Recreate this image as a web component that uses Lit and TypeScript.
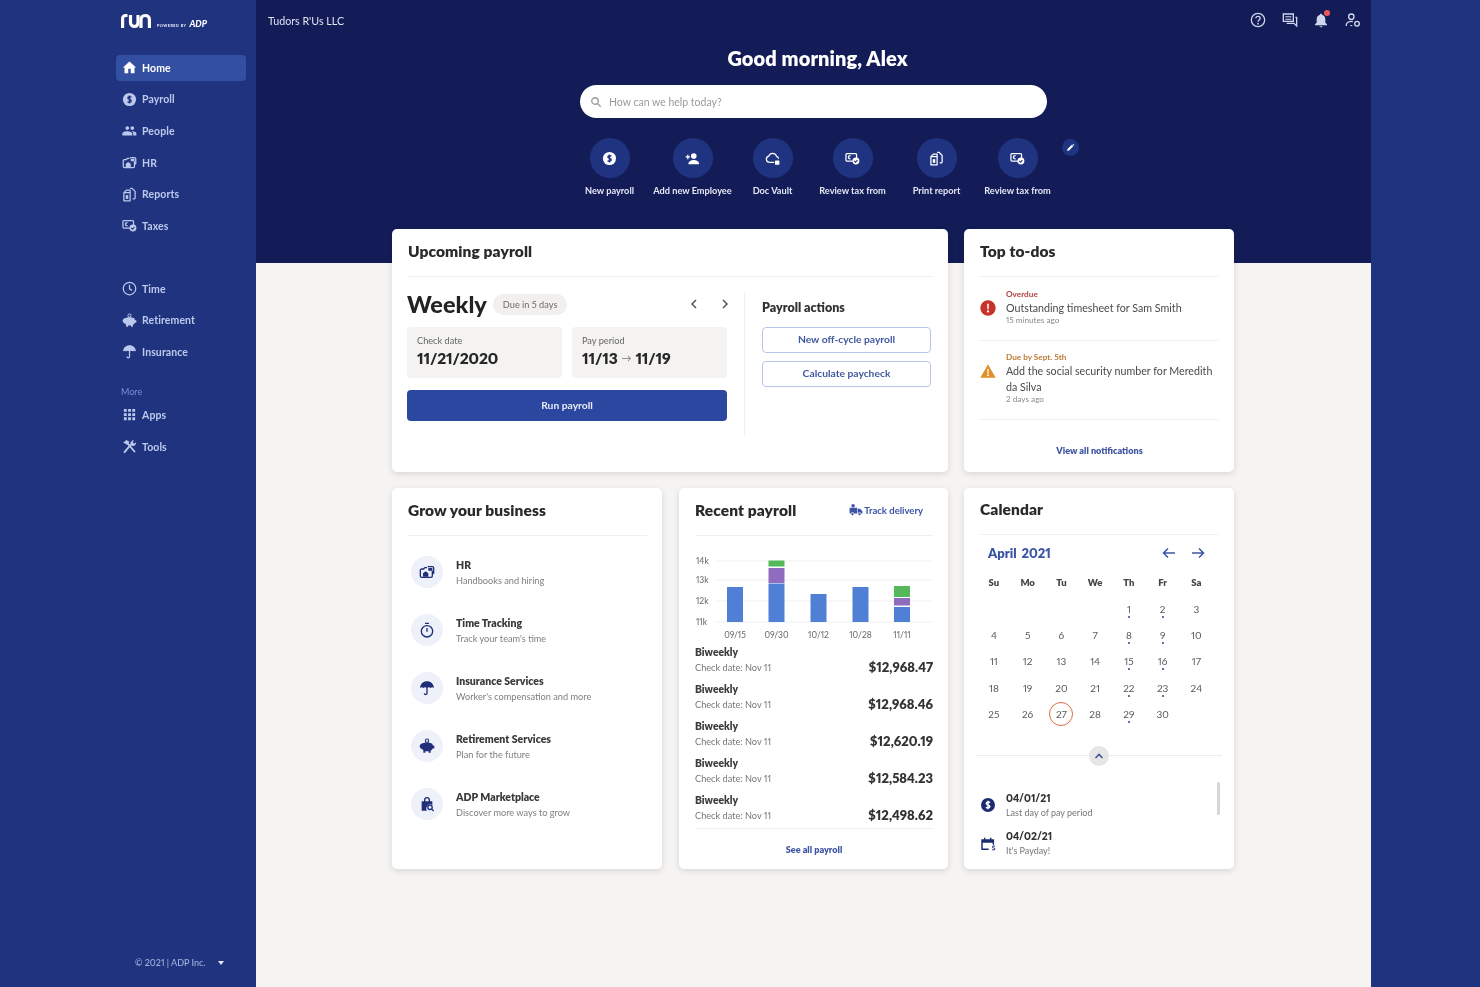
import { LitElement, html, css, svg, nothing } from "lit";
import { customElement } from "lit/decorators.js";

const I: Record<string, any> = {
  home: svg`<path fill="currentColor" d="M10 21v-7h4v7h6v-9h2.5L12 2.5 1.5 12H4v9z"/>`,
  dollar: svg`<circle cx="12" cy="12" r="10.5" fill="currentColor"/><path fill="none" stroke="var(--ic-bg,#1f337f)" stroke-width="2.2" d="M15 8.6C14 7.4 9.4 7 9.4 9.6c0 3 5.4 1.6 5.4 4.7 0 2.6-4.7 2.4-5.8 1M12 5.6v12.8"/>`,
  people: svg`<path fill="currentColor" d="M16.5 11c1.66 0 3-1.34 3-3s-1.34-3-3-3-3 1.34-3 3 1.34 3 3 3zm-8 0c1.66 0 3-1.34 3-3s-1.34-3-3-3-3 1.34-3 3 1.34 3 3 3zm0 2c-2.6 0-8 1.2-8 3.7V20h16v-3.3c0-2.5-5.400-3.700-8-3.700zm8 0c-.3 0-.7 0-1 .05 1.200.9 2.500 2.100 2.500 3.650V20H23v-3.300c0-2.500-4-3.700-6.500-3.700z"/>`,
  hr: svg`<g fill="none" stroke="currentColor" stroke-width="2" stroke-linejoin="round"><path d="M2 9.500a2 2 0 0 1 2-2h3l1.500-2h3.500M2 9.500V18a2 2 0 0 0 2 2h14a2 2 0 0 0 2-2V10"/><path d="M13 4h7a2 2 0 0 1 2 2v8h-2"/></g><path fill="currentColor" d="M6 19v-5l4-3 4 3v5zM14 6h6v4h-6z"/>`,
  report: svg`<g fill="none" stroke="currentColor" stroke-width="2" stroke-linejoin="round"><path d="M3 9h10v13H3zM3 9l4-4h6v4"/><path d="M13 2h3l5 5v10a2 2 0 0 1-2 2h-2"/></g><path fill="currentColor" d="M6 13h4v6H6z"/>`,
  tax: svg`<g fill="none" stroke="currentColor" stroke-width="2"><rect x="1.500" y="4" width="17" height="12" rx="1.500"/><path d="M9 7.500c-2 0-3.500 1-3.500 2.500s1.500 2.500 3.500 2.500"/></g><circle cx="17.500" cy="16" r="5.500" fill="currentColor"/><path fill="none" stroke="var(--ic-bg,#1f337f)" stroke-width="1.800" d="M14.800 16l2 2 3-3.500"/>`,
  clock: svg`<g fill="none" stroke="currentColor" stroke-width="2"><circle cx="12" cy="12" r="10"/><path d="M12 6v6.500l4 2.500"/></g>`,
  piggy: svg`<circle cx="12" cy="4" r="2.500" fill="none" stroke="currentColor" stroke-width="1.600"/><path fill="currentColor" d="M6 8c2-1.500 10-1.500 12 0l2 .5.500 2.500 2.500.800v3.500l-3 .7-1 2.500h-1.500V22h-3v-2h-5v2h-3v-3.500L5 17c-2-.5-4-2.500-4-4.500s2-4.500 5-4.500z"/>`,
  umbrella: svg`<path fill="currentColor" d="M12 2C6.500 2 2 6 1.500 12c1.500-1.500 3.500-1.500 5 0 1.500-1.500 3.500-1.500 5.500 0 2-1.500 4-1.500 5.500 0 1.500-1.500 3.500-1.500 5 0C22 6 17.500 2 12 2z"/><path fill="none" stroke="currentColor" stroke-width="2" d="M12 11v9a2 2 0 0 1-4 0"/>`,
  apps: svg`<path fill="currentColor" d="M3 3h4.500v4.500H3zM9.800 3h4.500v4.500H9.800zM16.500 3H21v4.500h-4.500zM3 9.800h4.500v4.500H3zM9.800 9.800h4.500v4.500H9.800zM16.500 9.800H21v4.500h-4.500zM3 16.500h4.500V21H3zM9.800 16.500h4.500V21H9.800zM16.500 16.500H21V21h-4.500z"/>`,
  tools: svg`<g fill="none" stroke="currentColor" stroke-width="3" stroke-linecap="round"><path d="M4 21 15 8M7 5l13 15"/></g><path fill="currentColor" d="M2 6l5-4.500 5 3-3 4.500zM14 9c-1-3 .5-7 5-7l-2 3 2.500 2.500L22.500 5c.5 4-3 7-6 6z"/>`,
  addUser: svg`<circle cx="14" cy="8" r="4.500" fill="currentColor"/><path fill="currentColor" d="M5.500 20c0-3.500 5-5.500 8.500-5.500s8.500 2 8.500 5.500v1h-17z"/><path fill="none" stroke="currentColor" stroke-width="2" d="M1 9.500h7M4.500 6v7"/>`,
  cloud: svg`<path fill="none" stroke="currentColor" stroke-width="2" stroke-linecap="round" d="M14 18H7a5 5 0 0 1-.8-9.900A6.500 6.500 0 0 1 18.500 8.500c1.500.5 2.500 1.500 3 3"/><rect x="16" y="15" width="7" height="7" rx="1" fill="currentColor"/>`,
  pencil: svg`<path fill="currentColor" d="M3 21l1-5L15.500 4.500l4 4L8 20zM17 3l1.500-1.200 3.700 3.700L21 7z"/>`,
  search: svg`<g fill="none" stroke="currentColor" stroke-width="2.600"><circle cx="10" cy="10" r="6.500"/><path d="M15 15l6.500 6.500"/></g>`,
  help: svg`<g fill="none" stroke="currentColor" stroke-width="1.900"><circle cx="12" cy="12" r="10"/><path d="M8.800 9.500c0-4 6.500-4 6.500-.2 0 2.700-3.300 2.500-3.300 5.200"/></g><circle cx="12" cy="17.500" r="1.300" fill="currentColor"/>`,
  chat: svg`<path fill="none" stroke="currentColor" stroke-width="2" d="M2 3h15v11H2zM7 17h11l4 4V8h-2"/><path fill="currentColor" d="M5 6.500h9V8H5zM5 10h9v1.500H5z"/>`,
  bell: svg`<path fill="currentColor" d="M12 2.500c-1 0-1.500.7-1.500 1.500C7 5 5.500 7.500 5.500 11v5L3 18.500V20h18v-1.500L18.500 16v-5c0-3.500-1.500-6-5-7 0-.8-.5-1.500-1.500-1.500zM9.500 21.200c.4 1 1.400 1.600 2.500 1.600s2.100-.6 2.500-1.600z"/>`,
  userCog: svg`<g fill="none" stroke="currentColor" stroke-width="2"><circle cx="9.500" cy="7" r="4"/><path d="M2 21v-2c0-3 4-5 7.500-5 .8 0 1.500.1 2.300.3"/><circle cx="18" cy="17.500" r="3.500"/></g><path fill="none" stroke="currentColor" stroke-width="1.500" d="M8 20.500h3"/>`,
  stopwatch: svg`<g fill="none" stroke="currentColor" stroke-width="2"><circle cx="12" cy="14" r="8.500"/><path d="M12 9v5.500M9 2h6"/></g>`,
  market: svg`<path fill="currentColor" d="M4 8h3.500V6a4.500 4.500 0 0 1 9 0v2H20v5.500a6 6 0 0 0-8 8.500H4zM9.500 8h5V6a2.500 2.500 0 0 0-5 0z"/><g fill="none" stroke="currentColor" stroke-width="2"><circle cx="16.500" cy="17" r="3.300"/><path d="M19 19.500l3 3"/></g>`,
  alert: svg`<circle cx="12" cy="12" r="11.500" fill="#c8332b"/><path fill="#fff" d="M10.700 5.500h2.600l-.3 8.500h-2zM12 15.500a1.700 1.700 0 1 1 0 3.400 1.700 1.700 0 0 1 0-3.400z"/>`,
  warn: svg`<path fill="#e0902a" d="M12 2 23.500 22H.500z"/><path fill="#fff" d="M10.900 9h2.200l-.3 7h-1.600zM12 17a1.400 1.400 0 1 1 0 2.800 1.400 1.400 0 0 1 0-2.800z"/>`,
  truck: svg`<path fill="currentColor" d="M1 8h13v10H1zM15 10h4l4 4v4h-8z"/><circle cx="6" cy="19" r="3" fill="#fff"/><circle cx="6" cy="19" r="2" fill="currentColor"/><circle cx="18" cy="19" r="3" fill="#fff"/><circle cx="18" cy="19" r="2" fill="currentColor"/><circle cx="7" cy="4.500" r="3" fill="currentColor"/>`,
  cal: svg`<g fill="none" stroke="currentColor" stroke-width="2.200"><path d="M13 20H3V6h17v7"/><path d="M7 2.500V7M16 2.500V7"/></g><path fill="currentColor" d="M3 6h17v4H3z"/><path fill="none" stroke="currentColor" stroke-width="1.500" d="M22.500 15.500c-2-1-4-.6-4 1 0 1.800 4 1 4 3 0 1.500-2.500 1.800-4.300.8"/>`,
};

const icon = (n: string, size = 16, cls = "") =>
  html`<svg class="ic ${cls}" width=${size} height=${size} viewBox="0 0 24 24" aria-hidden="true">${I[n]}</svg>`;

const NAV1 = [["home","Home"],["dollar","Payroll"],["people","People"],["hr","HR"],["report","Reports"],["tax","Taxes"]];
const NAV2 = [["clock","Time"],["piggy","Retirement"],["umbrella","Insurance"]];
const NAV3 = [["apps","Apps"],["tools","Tools"]];
const QUICK = [["dollar","New payroll"],["addUser","Add new Employee"],["cloud","Doc Vault"],["tax","Review tax from"],["report","Print report"],["tax","Review tax from"]];
const GROW = [
  ["hr","HR","Handbooks and hiring"],
  ["stopwatch","Time Tracking","Track your team's time"],
  ["umbrella","Insurance Services","Worker's compensation and more"],
  ["piggy","Retirement Services","Plan for the future"],
  ["market","ADP Marketplace","Discover more ways to grow"],
];
const PAY = ["$12,968.47","$12,968.46","$12,620.19","$12,584.23","$12,498.62"];
const DOTTED = new Set([1,2,8,9,15,16,22,23,29]);

const GRID = [[14,25],[13,44],[12,65],[11,86]];
const BARS: any[][] = [
  [["09/15",51,86,"#5080d6"]],
  [["09/30",47.500,86,"#5080d6"],["",32,47,"#8f6cc0"],["",24.500,30.500,"#55b95c"]],
  [["10/12",58,86,"#5080d6"]],
  [["10/28",51,86,"#5080d6"]],
  [["11/11",71,86,"#5080d6"],["",62,69.500,"#8f6cc0"],["",50,61,"#55b95c"]],
];
const BARX = [41, 82.500, 124.500, 166.500, 208];

@customElement("app-root")
export class AppRoot extends LitElement {
  static styles = css`
    :host { display: block; height: 100vh; overflow: hidden; background: #1f337f; font-family: Lato, "Noto Sans", sans-serif; color: #2b2b2b; font-variant-numeric: proportional-nums; }
    .ic { display: block; flex: none; }
    .shell { display: flex; height: 100%; filter: blur(.4px); }
    .side { width: 256px; flex: none; box-sizing: border-box; padding: 0 10px 0 116px; display: flex; flex-direction: column; color: #bdc9ec; --ic-bg: #1f337f; }
    .logo { display: flex; align-items: flex-end; height: 29px; margin: 0 0 26px 5px; gap: 6px; color: #fff; }
    .pow { font-size: 3.800px; font-weight: 900; letter-spacing: .45px; display: flex; align-items: flex-end; gap: 3px; margin-bottom: 1px; white-space: nowrap; color: #e6eaf8; }
    .pow b { font-size: 9px; font-style: italic; font-weight: 900; line-height: 8px; color: #fff; letter-spacing: 0; }
    .nav { display: flex; flex-direction: column; gap: 5.600px; }
    .nav + .nav { margin-top: 37px; }
    .item { display: flex; align-items: center; height: 26px; padding: 0 0 .5px 6px; box-sizing: border-box; gap: 5px; border-radius: 4px; font-size: 10.500px; font-weight: 700; letter-spacing: .1px; }
    .item.on { background: #334fa2; color: #fff; --ic-bg: #334fa2; }
    .more { font-size: 9px; color: #7b8fd3; margin: 21px 0 4px 5px; line-height: 12px; }
    .foot { margin-top: auto; margin-bottom: 18px; display: flex; align-items: center; gap: 13px; padding-left: 19px; font-size: 9px; font-weight: 500; color: #a4b2df; line-height: 12px; }
    .foot i { width: 0; height: 0; border: 3px solid transparent; border-top: 4px solid #e5eaf8; border-bottom: 0; }

    .main { width: 1115px; flex: none; background: linear-gradient(#131c56 263px, #f5f4f2 263px); }
    .top { height: 40px; display: flex; align-items: center; justify-content: space-between; padding: 0 10px 0 12px; color: #dfe3f2; font-size: 10.700px; }
    .tools { display: flex; gap: 15.600px; color: #cfd6ee; align-items: center; }
    .bell { position: relative; }
    .bell i { position: absolute; right: -1px; top: -2px; width: 6px; height: 6px; border-radius: 50%; background: #ea5a55; }
    h1 { margin: 0; height: 37px; line-height: 37px; text-align: center; padding-left: 8px; color: #fff; font-size: 20px; font-weight: 800; letter-spacing: .1px; }
    .search { box-sizing: border-box; width: 467px; height: 33px; margin: 8px auto 0; border-radius: 17px; background: #fff; display: flex; align-items: center; gap: 7px; padding-left: 10px; color: #9a9a9a; font-size: 10.500px; }
    .quick { position: relative; width: 490px; margin: 20px auto 0; display: grid; grid-template-columns: 82px 84px 76px 84px 84px 78px; }
    .q { display: flex; flex-direction: column; align-items: center; color: #e3e7f5; font-size: 9.200px; font-weight: 700; white-space: nowrap; line-height: 14px; }
    .circle { width: 40px; height: 40px; border-radius: 50%; background: #1f3380; display: flex; align-items: center; justify-content: center; margin-bottom: 6px; color: #fff; --ic-bg: #1f3380; }
    .pen { position: absolute; left: 493px; top: 1px; width: 17px; height: 17px; border-radius: 50%; background: #1f3380; color: #fff; display: flex; align-items: center; justify-content: center; }

    .grid { margin: 31px 0 0 136px; display: grid; grid-template-columns: repeat(3, 270px); grid-template-rows: 243px 381px; gap: 16px; }
    .card { background: #fff; border-radius: 5px; box-shadow: 0 2px 6px rgba(0,0,0,.12); padding: 0 15px 0 16px; box-sizing: border-box; position: relative; overflow: hidden; min-width: 0; }
    .card.mid { margin-left: 1px; }
    .wide { grid-column: span 2; }
    .ct { height: 48px; box-sizing: border-box; border-bottom: 1px solid #efefef; display: flex; align-items: center; justify-content: space-between; font-size: 15.500px; font-weight: 800; letter-spacing: .1px; color: #2a2a2a; padding-bottom: 3px; }
    .ct.cal { height: 47px; padding-bottom: 5px; }
    .track { display: flex; align-items: center; gap: 1px; font-size: 9.500px; font-weight: 700; letter-spacing: 0; color: #3c53a8; margin-right: 10px; }

    .pay { display: flex; }
    .pl { width: 320px; flex: none; margin-left: -1px; padding-top: 13px; }
    .wk { display: flex; align-items: center; height: 28px; }
    .wk b { font-size: 23.500px; font-weight: 900; color: #222; line-height: 28px; }
    .badge { margin-left: 6px; height: 21px; line-height: 21px; padding: 0 10px; border-radius: 11px; background: #f1f0ee; color: #6d6d6d; font-size: 9.200px; }
    .chev { margin-left: auto; margin-right: -2px; display: flex; gap: 23px; color: #555; }
    .boxes { display: grid; grid-template-columns: 155px 155px; gap: 10px; margin-top: 9px; }
    .box { height: 51px; box-sizing: border-box; background: #f4f3f1; border-radius: 4px; padding: 8px 10px; font-size: 9.200px; color: #666; line-height: 12px; }
    .box div { margin-top: 2px; font-size: 15.500px; font-weight: 800; letter-spacing: -.15px; color: #272727; line-height: 19px; display: flex; align-items: center; gap: 4px; }
    .box small { font-size: 10px; color: #777; font-weight: 400; }
    .run { margin-top: 12px; height: 31px; box-sizing: border-box; padding-bottom: 2px; border-radius: 4px; background: #2c479f; color: #e8ecf8; font-size: 10.300px; font-weight: 700; display: flex; align-items: center; justify-content: center; }
    .pr { margin: 15px 0 0 17px; height: 144px; box-sizing: border-box; border-left: 1px solid #efefef; padding: 8px 0 0 17px; width: 187px; flex: none; }
    .pr h3 { margin: 0 0 11px; font-size: 12.500px; line-height: 16px; font-weight: 800; color: #333; }
    .btn { height: 26px; box-sizing: border-box; padding-bottom: 2px; border: 1.500px solid #b7c6e8; border-radius: 4px; color: #40589f; font-size: 10.300px; font-weight: 700; display: flex; align-items: center; justify-content: center; margin-bottom: 8px; }

    .todo { border-bottom: 1px solid #f0f0f0; display: flex; align-items: flex-start; gap: 10px; box-sizing: border-box; }
    .todo.a { height: 64px; padding-top: 12px; }
    .todo.b { height: 79px; padding-top: 11px; }
    .todo .ic { margin-top: 11px; }
    .tag { font-size: 8.200px; line-height: 10px; font-weight: 700; }
    .tag.r { color: #b4413f; }
    .tag.o { color: #bd7a35; }
    .msg { font-size: 10.700px; line-height: 16px; color: #4a4a4a; margin-top: 1px; }
    .ago { font-size: 8.200px; line-height: 10px; color: #8a8a8a; margin-top: -1px; }
    .link { text-align: center; font-size: 9.100px; font-weight: 800; color: #3f55a3; line-height: 14px; }
    .link.v { margin-top: 24px; }
    .link.s { margin-top: 14px; }

    .glist { display: flex; flex-direction: column; gap: 26px; padding: 20px 0 0 3px; }
    .g { display: flex; align-items: center; gap: 13px; height: 32px; }
    .gi { width: 32px; height: 32px; border-radius: 50%; background: #eef1fa; color: #1f2f78; display: flex; align-items: center; justify-content: center; --ic-bg: #eef1fa; }
    .gt { padding-top: 1px; }
    .gn { font-size: 10.500px; font-weight: 800; color: #3a3a3a; line-height: 14px; }
    .gs { font-size: 9.200px; color: #7f7f7f; line-height: 14px; margin-top: 2px; }

    .chart { display: block; margin-left: -1px; }
    .chart text { font-size: 8.500px; fill: #666; font-family: Lato, sans-serif; }
    .rows { display: flex; flex-direction: column; gap: 6.500px; }
    .row { height: 30.500px; display: flex; justify-content: space-between; align-items: flex-end; }
    .bw { font-size: 10.300px; font-weight: 800; color: #3c3c3c; line-height: 14px; margin-bottom: 1px; }
    .cd { font-size: 9.200px; color: #777; line-height: 15px; }
    .amt { font-size: 13px; font-weight: 800; color: #333; line-height: 15px; }
    .rule { margin-top: 5px; border-top: 1px solid #efefef; }

    .mon { display: flex; align-items: center; margin-top: 9px; padding: 0 14px 0 8px; height: 18px; font-size: 13px; font-weight: 800; color: #3c55a5; word-spacing: 2px; }
    .mon span { margin-left: auto; display: flex; gap: 15px; }
    .days { display: grid; grid-template-columns: repeat(7, 33.750px); margin-left: -3px; justify-items: center; align-items: center; }
    .days.h { margin-top: 14px; line-height: 14px; font-size: 9.500px; font-weight: 800; color: #444; }
    .days.d { margin-top: 6px; grid-auto-rows: 26.200px; font-size: 10px; color: #5a5a5a; }
    .dt { width: 24px; height: 24px; box-sizing: border-box; display: flex; align-items: center; justify-content: center; position: relative; border-radius: 50%; }
    .dt.now { border: 1.500px solid #dd6c42; }
    .dt i { position: absolute; left: 11px; top: 19px; width: 2px; height: 2px; border-radius: 50%; background: #2c4294; }
    .sep { display: flex; align-items: center; margin: 19px -3px 0 -4px; }
    .sep::before, .sep::after { content: ""; flex: 1; height: 1px; background: #ececec; }
    .up { width: 20px; height: 20px; border-radius: 50%; background: #e6e6e6; display: flex; align-items: center; justify-content: center; color: #44559b; }
    .evs { position: relative; margin-top: 25px; display: flex; flex-direction: column; gap: 10px; }
    .ev { display: flex; align-items: center; gap: 10px; height: 28.500px; color: #1c2b72; --ic-bg: #fff; }
    .ev b { display: block; font-size: 10.300px; font-weight: 800; color: #333; line-height: 14px; }
    .ev small { display: block; font-size: 9px; color: #777; line-height: 14px; margin-top: 1px; }
    .thumb { position: absolute; right: -1px; top: -9px; width: 3px; height: 33px; border-radius: 2px; background: #d6d6d6; }
  `;

  private navItem(i: string[], on = false) {
    return html`<div class="item ${on ? "on" : ""}">${icon(i[0], 15)}<span>${i[1]}</span></div>`;
  }

  private chart() {
    return html`<svg class="chart" width="238" height="108" viewBox="0 0 238 108">
      ${GRID.map(([v, y]) => svg`<line x1="22" x2="238" y1=${y} y2=${y} stroke="#f0f0f0"/><text x="2" y=${y + 3}>${v}k</text>`)}
      ${BARS.map((segs, k) => svg`${segs.map((s) => svg`<rect x=${BARX[k] - 8} y=${s[1]} width="16" height=${s[2] - s[1]} fill=${s[3]}/>`)}<text x=${BARX[k]} y="101.500" text-anchor="middle">${segs[0][0]}</text>`)}
    </svg>`;
  }

  render() {
    const blanks = [0, 0, 0, 0];
    const dates = Array.from({ length: 30 }, (_, i) => i + 1);
    return html`<div class="shell">
      <aside class="side">
        <div class="logo">
          <svg width="30" height="16" viewBox="0 0 30 16" fill="none" stroke="#fff" stroke-width="3.200" aria-hidden="true"><path d="M1.600 15V5.500A3 3 0 0 1 4.600 2.500H6.500"/><path d="M9.500 2v7.500A4 4 0 0 0 13.500 13.500 4 4 0 0 0 17 10V2"/><path d="M20 15V6.500A4 4 0 0 1 24 2.500 4 4 0 0 1 28.400 6.500V15"/></svg>
          <div class="pow">POWERED BY <b>ADP</b></div>
        </div>
        <nav class="nav">${NAV1.map((n, i) => this.navItem(n, i === 0))}</nav>
        <nav class="nav">${NAV2.map((n) => this.navItem(n))}</nav>
        <div class="more">More</div>
        <nav class="nav">${NAV3.map((n) => this.navItem(n))}</nav>
        <div class="foot"><span>© 2021 | ADP Inc.</span><i></i></div>
      </aside>

      <main class="main">
        <header class="top">
          <span>Tudors R'Us LLC</span>
          <div class="tools">${icon("help", 16)}${icon("chat", 16)}<div class="bell">${icon("bell", 16)}<i></i></div>${icon("userCog", 16)}</div>
        </header>
        <h1>Good morning, Alex</h1>
        <div class="search">${icon("search", 12)}<span>How can we help today?</span></div>
        <div class="quick">
          ${QUICK.map(([ic, t]) => html`<div class="q"><div class="circle">${icon(ic, 15)}</div>${t}</div>`)}
          <div class="pen">${icon("pencil", 9)}</div>
        </div>

        <section class="grid">
          <article class="card wide">
            <div class="ct">Upcoming payroll</div>
            <div class="pay">
              <div class="pl">
                <div class="wk"><b>Weekly</b><span class="badge">Due in 5 days</span>
                  <span class="chev">
                    <svg width="8" height="10" viewBox="0 0 8 10" fill="none" stroke="currentColor" stroke-width="1.500"><path d="M6 1 2 5l4 4"/></svg>
                    <svg width="8" height="10" viewBox="0 0 8 10" fill="none" stroke="currentColor" stroke-width="1.500"><path d="M2 1l4 4-4 4"/></svg>
                  </span></div>
                <div class="boxes">
                  <div class="box">Check date<div>11/21/2020</div></div>
                  <div class="box">Pay period<div>11/13 <small>→</small> 11/19</div></div>
                </div>
                <div class="run">Run payroll</div>
              </div>
              <div class="pr">
                <h3>Payroll actions</h3>
                <div class="btn">New off-cycle payroll</div>
                <div class="btn">Calculate paycheck</div>
              </div>
            </div>
          </article>

          <article class="card">
            <div class="ct">Top to-dos</div>
            <div class="todo a">${icon("alert", 16)}<div><div class="tag r">Overdue</div><div class="msg">Outstanding timesheet for Sam Smith</div><div class="ago">15 minutes ago</div></div></div>
            <div class="todo b">${icon("warn", 16)}<div><div class="tag o">Due by Sept. 5th</div><div class="msg">Add the social security number for Meredith da Silva</div><div class="ago">2 days ago</div></div></div>
            <div class="link v">View all notifications</div>
          </article>

          <article class="card">
            <div class="ct">Grow your business</div>
            <div class="glist">
              ${GROW.map(([ic, n, s]) => html`<div class="g"><div class="gi">${icon(ic, 16)}</div><div class="gt"><div class="gn">${n}</div><div class="gs">${s}</div></div></div>`)}
            </div>
          </article>

          <article class="card mid">
            <div class="ct">Recent payroll<span class="track">${icon("truck", 14)}Track delivery</span></div>
            ${this.chart()}
            <div class="rows">
              ${PAY.map((a) => html`<div class="row"><div><div class="bw">Biweekly</div><div class="cd">Check date: Nov 11</div></div><div class="amt">${a}</div></div>`)}
            </div>
            <div class="rule"></div>
            <div class="link s">See all payroll</div>
          </article>

          <article class="card">
            <div class="ct cal">Calendar</div>
            <div class="mon">April 2021<span>
              <svg width="14" height="12" viewBox="0 0 14 12" fill="none" stroke="currentColor" stroke-width="1.500"><path d="M13 6H2M6 1.500 1.500 6 6 10.500"/></svg>
              <svg width="14" height="12" viewBox="0 0 14 12" fill="none" stroke="currentColor" stroke-width="1.500"><path d="M1 6h11M8 1.500 12.500 6 8 10.500"/></svg>
            </span></div>
            <div class="days h">${["Su","Mo","Tu","We","Th","Fr","Sa"].map((d) => html`<span>${d}</span>`)}</div>
            <div class="days d">
              ${blanks.map(() => html`<span></span>`)}
              ${dates.map((d) => html`<span class="dt ${d === 27 ? "now" : ""}">${d}${DOTTED.has(d) ? html`<i></i>` : nothing}</span>`)}
            </div>
            <div class="sep"><div class="up"><svg width="10" height="8" viewBox="0 0 10 8" fill="none" stroke="currentColor" stroke-width="1.600"><path d="M1.500 6 5 2.500 8.500 6"/></svg></div></div>
            <div class="evs">
              <div class="thumb"></div>
              <div class="ev">${icon("dollar", 16)}<div><b>04/01/21</b><small>Last day of pay period</small></div></div>
              <div class="ev">${icon("cal", 16)}<div><b>04/02/21</b><small>It's Payday!</small></div></div>
            </div>
          </article>
        </section>
      </main>
    </div>`;
  }
}
